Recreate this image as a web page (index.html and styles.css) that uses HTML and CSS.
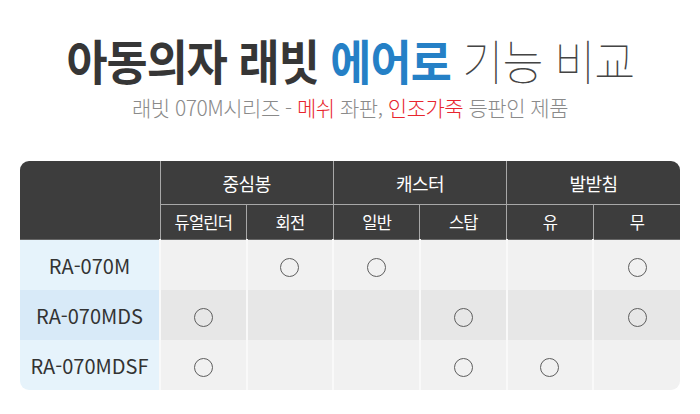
FILE: index.html
```html
<!DOCTYPE html>
<html lang="ko">
<head>
<meta charset="utf-8">
<link rel="stylesheet" href="styles.css">
</head>
<body>
<div class="page">
  <h1 class="title"><span class="title-inner"><b class="dark">아동의자 래빗</b> <b class="blue">에어로</b> <span class="thin">기능 비교</span></span></h1>
  <p class="subtitle">래빗 070M시리즈 - <em class="red">메쉬</em> 좌판, <em class="red">인조가죽</em> 등판인 제품</p>
  <div class="table-wrap">
    <table class="cmp">
      <colgroup>
        <col class="c-model"><col><col><col><col><col><col>
      </colgroup>
      <thead>
        <tr class="h1">
          <th rowspan="2" class="corner"></th>
          <th colspan="2">중심봉</th>
          <th colspan="2">캐스터</th>
          <th colspan="2" class="last">발받침</th>
        </tr>
        <tr class="h2">
          <th>듀얼린더</th><th>회전</th><th>일반</th><th>스탑</th><th>유</th><th class="last">무</th>
        </tr>
      </thead>
      <tbody>
        <tr class="odd">
          <td class="model">RA-070M</td>
          <td></td><td><span class="o"></span></td><td><span class="o"></span></td><td></td><td></td><td><span class="o"></span></td>
        </tr>
        <tr class="even">
          <td class="model">RA-070MDS</td>
          <td><span class="o"></span></td><td></td><td></td><td><span class="o"></span></td><td></td><td><span class="o"></span></td>
        </tr>
        <tr class="odd">
          <td class="model">RA-070MDSF</td>
          <td><span class="o"></span></td><td></td><td></td><td><span class="o"></span></td><td><span class="o"></span></td><td></td>
        </tr>
      </tbody>
    </table>
  </div>
</div>
</body>
</html>
```
FILE: styles.css
```css
html, body {
  margin: 0;
  padding: 0;
  background: #ffffff;
}
body {
  font-family: "Noto Sans CJK KR", "Noto Sans", sans-serif;
  color: #333;
}
.page {
  width: 700px;
  height: 414px;
  padding-top: 29px;
  box-sizing: border-box;
}
.title {
  margin: 0;
  height: 60px;
  line-height: 60px;
  font-size: 48px;
  text-align: center;
  white-space: nowrap;
  font-weight: normal;
}
.title-inner {
  display: inline-block;
  transform: scaleX(0.93);
  transform-origin: center;
  letter-spacing: -1px;
}
.dark { color: #363636; font-weight: 700; }
.blue { color: #2580c6; font-weight: 700; }
.thin { color: #444; font-weight: 100; }
.subtitle {
  margin: 7px 0 0;
  height: 22px;
  line-height: 22px;
  font-size: 21px;
  text-align: center;
  color: #8a8a8a;
  font-weight: 300;
  white-space: nowrap;
  letter-spacing: -0.5px;
}
.red { color: #e8252e; font-style: normal; }
.table-wrap {
  margin: 43px 20px 0;
  width: 660px;
  border-radius: 9px;
  overflow: hidden;
}
.cmp {
  width: 660px;
  border-collapse: collapse;
  table-layout: fixed;
}
.c-model { width: 140px; }
.cmp th {
  background: #3d3d3d;
  color: #fff;
  font-weight: 400;
  border-left: 1px solid #a8a8a8;
  padding: 0;
  text-align: center;
}
.cmp th.corner { border-left: none; }
.h1 th {
  height: 43px;
  font-size: 18px;
  letter-spacing: -0.5px;
  border-bottom: 1px solid #a8a8a8;
}
.h2 th {
  height: 34px;
  font-size: 16.5px;
  letter-spacing: -0.8px;
  border-bottom: 1px solid #666;
}
.cmp .h1 th.corner { border-bottom: 1px solid #666; }
.cmp td {
  height: 50px;
  padding: 0;
  text-align: center;
  vertical-align: middle;
  border-left: 2px solid #f9f9f9;
}
.cmp td.model {
  border-left: none;
  font-size: 20px;
  color: #333;
}
.odd td { background: #f1f1f1; }
.even td { background: #e7e7e7; }
.odd td.model { background: #e6f3fb; }
.even td.model { background: #d8eaf8; }
.o {
  display: inline-block;
  width: 17px;
  height: 17px;
  border: 1.3px solid #5e5e5e;
  border-radius: 50%;
  vertical-align: middle;
}
```
